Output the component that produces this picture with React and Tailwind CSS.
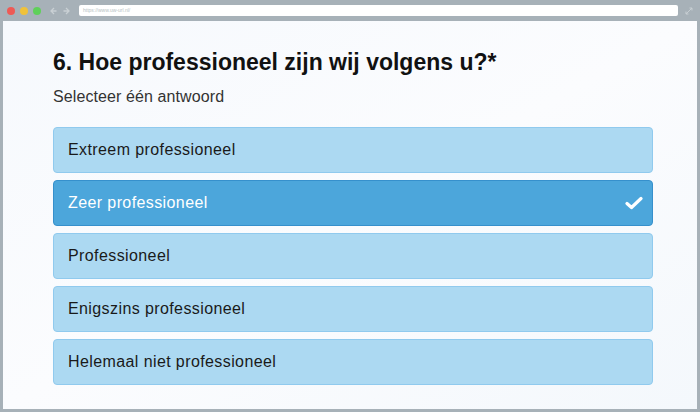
import React from 'react';

const options = [
  'Extreem professioneel',
  'Zeer professioneel',
  'Professioneel',
  'Enigszins professioneel',
  'Helemaal niet professioneel',
];

export default function App() {
  const selected = 1;

  return (
    <div className="w-[700px] h-[412px] bg-[#a7b1b8] flex flex-col overflow-hidden" style={{ fontFamily: '"Liberation Sans", Arial, sans-serif' }}>
      {/* browser chrome */}
      <div className="h-[21px] flex items-center px-[7px] shrink-0">
        <div className="flex items-center gap-[5px]">
          <span className="w-[8px] h-[8px] rounded-full bg-[#ee5a55]" />
          <span className="w-[8px] h-[8px] rounded-full bg-[#f0c23a]" />
          <span className="w-[8px] h-[8px] rounded-full bg-[#5fd05a]" />
        </div>
        <div className="flex items-center gap-[6px] ml-[8px] text-[#c9d0d4]">
          <svg width="8" height="8" viewBox="0 0 8 8"><path d="M5 1 L2 4 L5 7 M2 4 H7.5" stroke="currentColor" strokeWidth="1.3" fill="none" /></svg>
          <svg width="8" height="8" viewBox="0 0 8 8"><path d="M3 1 L6 4 L3 7 M6 4 H0.5" stroke="currentColor" strokeWidth="1.3" fill="none" /></svg>
        </div>
        <div className="ml-[8px] w-[602px] h-[11px] bg-white rounded-[2px] flex items-center px-[4px]">
          <span className="text-[5px] text-[#b8bfc4]">https://www.uw-url.nl/</span>
        </div>
        <svg className="ml-[7px] text-[#c9d0d4]" width="8" height="8" viewBox="0 0 8 8"><path d="M1 7 L7 1 M4.5 1 H7 V3.5 M1 4.5 V7 H3.5" stroke="currentColor" strokeWidth="1" fill="none" /></svg>
      </div>

      {/* page */}
      <div className="flex-1 mx-[3px] mb-[3px] bg-gradient-to-br from-[#f6f9fd] via-[#fbfcfe] to-[#f4f8fc] px-[50px] pt-[27px]">
        <h1 className="text-[23px] leading-[28px] font-bold text-[#111]">6. Hoe professioneel zijn wij volgens u?*</h1>
        <p className="mt-[12px] text-[16px] leading-[18px] tracking-[0.1px] text-[#333]">Selecteer één antwoord</p>
        <div className="mt-[21px] flex flex-col gap-[7px] w-[600px]">
          {options.map((opt, i) => (
            <div
              key={opt}
              className={`h-[46px] rounded-[4px] border flex items-center justify-between pl-[14px] pr-[9px] text-[16px] tracking-[0.4px] ${
                i === selected
                  ? 'bg-[#4ca6db] border-[#3690cc] text-white'
                  : 'bg-[#acd9f2] border-[#90caee] text-[#1a1a1a]'
              }`}
            >
              <span>{opt}</span>
              {i === selected && (
                <svg width="18" height="14" viewBox="0 0 18 14">
                  <path d="M2 7.5 L6.5 11.5 L16 2.5" stroke="white" strokeWidth="3.2" fill="none" strokeLinecap="round" strokeLinejoin="round" />
                </svg>
              )}
            </div>
          ))}
        </div>
      </div>
    </div>
  );
}
